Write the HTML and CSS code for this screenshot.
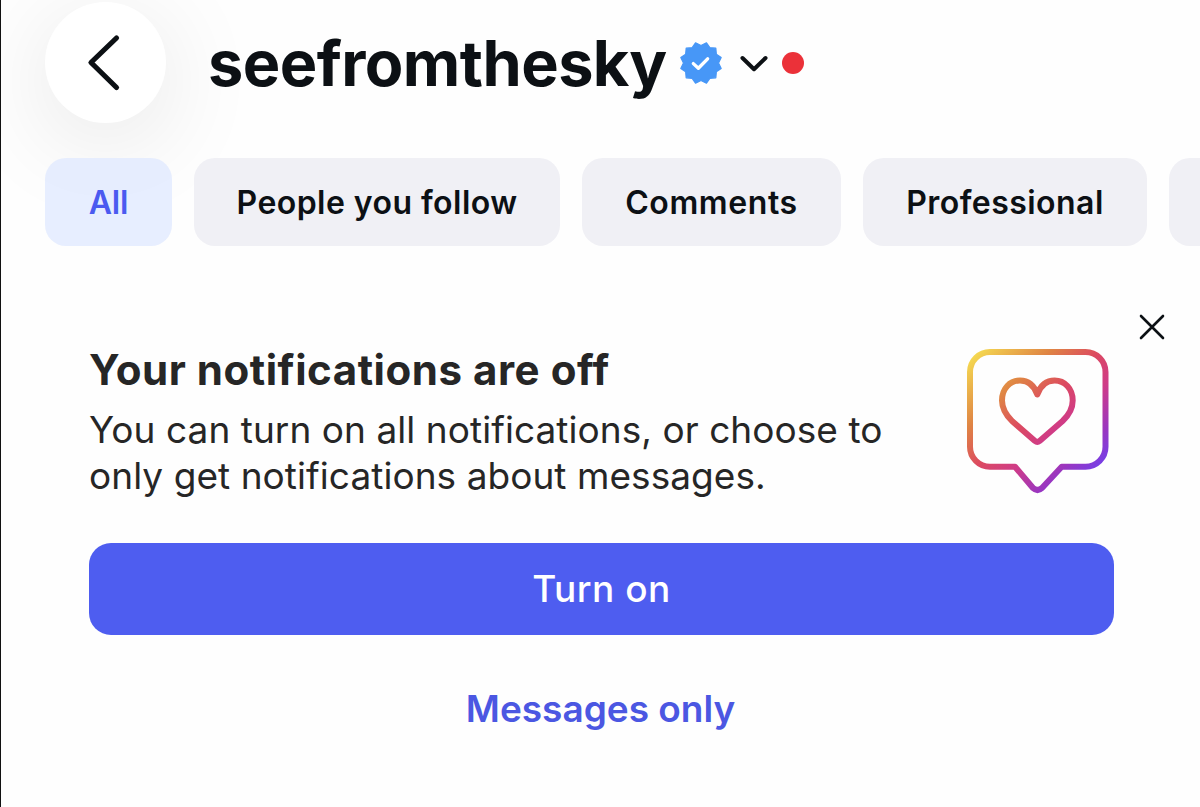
FILE: index.html
```html
<!DOCTYPE html>
<html lang="en">
<head>
<meta charset="utf-8">
<title>Messages</title>
<link rel="stylesheet" href="styles.css">
</head>
<body>
<main class="screen">
  <header class="header">
    <button class="back" aria-label="Back">
      <svg width="121" height="121" viewBox="0 0 121 121"><path d="M71.500 36 46 60.500 71.500 85.500" fill="none" stroke="#0c1014" stroke-width="5.200" stroke-linecap="round" stroke-linejoin="round"/></svg>
    </button>
    <h1 class="username">seefromthesky</h1>
    <svg class="verified" width="42" height="42" viewBox="0 0 40 40"><path fill="#4797f7" stroke="#4797f7" stroke-width="1.200" stroke-linejoin="round" d="M20 3.300 25.200.8 28.400 5.400 34.100 5.900 34.600 11.600 39.200 14.800 36.700 20 39.200 25.200 34.600 28.400 34.100 34.100 28.400 34.600 25.200 39.200 20 36.700 14.800 39.200 11.600 34.600 5.900 34.100 5.400 28.400.8 25.200 3.300 20 .8 14.800 5.400 11.600 5.900 5.900 11.600 5.400 14.800.8Z"/><path d="m12.700 20.600 4.800 4.400 8.800-9" fill="none" stroke="#fff" stroke-width="3.200" stroke-linecap="round" stroke-linejoin="round"/></svg>
    <svg class="chevron" width="28" height="18" viewBox="0 0 28 18"><path d="m2.500 3 11.500 11.200L25.500 3" fill="none" stroke="#0c1014" stroke-width="4" stroke-linecap="round" stroke-linejoin="round"/></svg>
    <span class="unread-dot"></span>
  </header>
  <nav class="chips">
    <button class="chip chip-all">All</button>
    <button class="chip chip-people">People you follow</button>
    <button class="chip chip-comments">Comments</button>
    <button class="chip chip-pro">Professional</button>
    <button class="chip chip-next" aria-label="More"></button>
  </nav>
  <section class="notice">
    <div class="notice-row">
      <div class="notice-copy">
        <h2 class="notice-title">Your notifications are off</h2>
        <p class="notice-text">You can turn on all notifications, or choose to<br>only get notifications about messages.</p>
      </div>
      <svg class="bubble" width="144" height="148" viewBox="0 0 144 148">
        <defs><linearGradient id="ig" gradientUnits="userSpaceOnUse" x1="12" y1="6" x2="128" y2="130">
          <stop offset="0" stop-color="#f4d650"/><stop offset=".28" stop-color="#df8444"/><stop offset=".48" stop-color="#dc4a60"/><stop offset=".65" stop-color="#cf3b88"/><stop offset=".84" stop-color="#9a36c0"/><stop offset="1" stop-color="#7140ec"/>
        </linearGradient></defs>
        <g fill="none" stroke="url(#ig)" stroke-width="6" stroke-linejoin="round">
          <path d="M24 5H119.500A20 20 0 0 1 139.500 25V99.700A20 20 0 0 1 119.500 119.700H95.700L76 141Q71.500 145 67 141L49 119.700H24A20 20 0 0 1 4 99.700V25A20 20 0 0 1 24 5Z"/>
          <path d="M71.300 47.500C68 38 62 33.500 54 33.500C44 33.500 36 41.500 36 53.500C36 62 40 68 46 74L69 94Q71.300 95.800 73.600 94L96.600 74C103 68 106.700 62 106.700 53.500C106.700 41.500 98.600 33.500 88.600 33.500C80.600 33.500 74.600 38 71.300 47.500Z"/>
        </g>
      </svg>
      <button class="close" aria-label="Close"><svg width="28" height="28" viewBox="0 0 28 28"><path d="m3 3 22 22M25 3 3 25" stroke="#0c1014" stroke-width="2.600" stroke-linecap="round"/></svg></button>
    </div>
    <button class="primary">Turn on</button>
    <button class="secondary">Messages only</button>
  </section>
</main>
</body>
</html>
```
FILE: styles.css
```css
* { box-sizing: border-box; }
body { margin: 0; background: #fefefe; font-family: Inter, "Liberation Sans", sans-serif; }
button { appearance: none; border: 0; padding: 0; margin: 0; background: none; font: inherit; color: inherit; }
svg { display: block; flex: none; }
.screen { width: 1200px; height: 807px; overflow: hidden; border-left: 1px solid #111; background: #fefefe; }
.header { display: flex; align-items: center; height: 123px; padding: 2px 0 0 43.5px; }
.back { flex: none; width: 121px; height: 121px; border-radius: 50%; background: #fff; box-shadow: 0 18px 100px rgba(0, 0, 0, .1); }
.username { margin: 0 0 0 42.5px; width: 460px; font-size: 63px; line-height: 76px; font-weight: 700; letter-spacing: -.55px; color: #0c1014; white-space: nowrap; }
.verified { margin-left: 12px; }
.chevron { margin: 2px 0 0 18px; }
.unread-dot { width: 22px; height: 22px; margin-left: 13.5px; border-radius: 50%; background: #eb3139; }
.chips { display: flex; gap: 22px; margin-top: 35px; padding-left: 44px; }
.chip { flex: none; height: 88px; border-radius: 21px; background: #f0f0f5; font-size: 32px; font-weight: 600; letter-spacing: .45px; color: #0c1014; white-space: nowrap; }
.chip-all { width: 127px; background: rgba(222, 232, 255, .72); color: #4b5af0; letter-spacing: -.2px; }
.chip-people { width: 366px; }
.chip-comments { width: 259px; letter-spacing: .6px; }
.chip-pro { width: 284px; }
.chip-next { width: 120px; }
.notice { display: flex; flex-direction: column; padding: 66px 86px 0 88px; }
.notice-row { display: flex; height: 231px; }
.notice-copy { width: 877px; padding-top: 32px; }
.notice-title { margin: 0; font-size: 42px; line-height: 52px; font-weight: 700; letter-spacing: .54px; color: #262626; white-space: nowrap; }
.notice-text { margin: 11px 0 0; font-size: 37px; line-height: 46px; letter-spacing: .06px; color: #262626; white-space: nowrap; }
.bubble { margin-top: 35px; }
.close { flex: none; width: 28px; height: 28px; margin: 1px -56px 0 28px; }
.primary { height: 92px; padding-bottom: 2px; border-radius: 22px; background: #4e5df0; color: #fff; font-size: 37px; font-weight: 550; letter-spacing: .5px; }
.secondary { align-self: center; margin: 51px 2px 0 0; font-size: 37px; line-height: 46px; font-weight: 600; color: #4b57e2; }
```
